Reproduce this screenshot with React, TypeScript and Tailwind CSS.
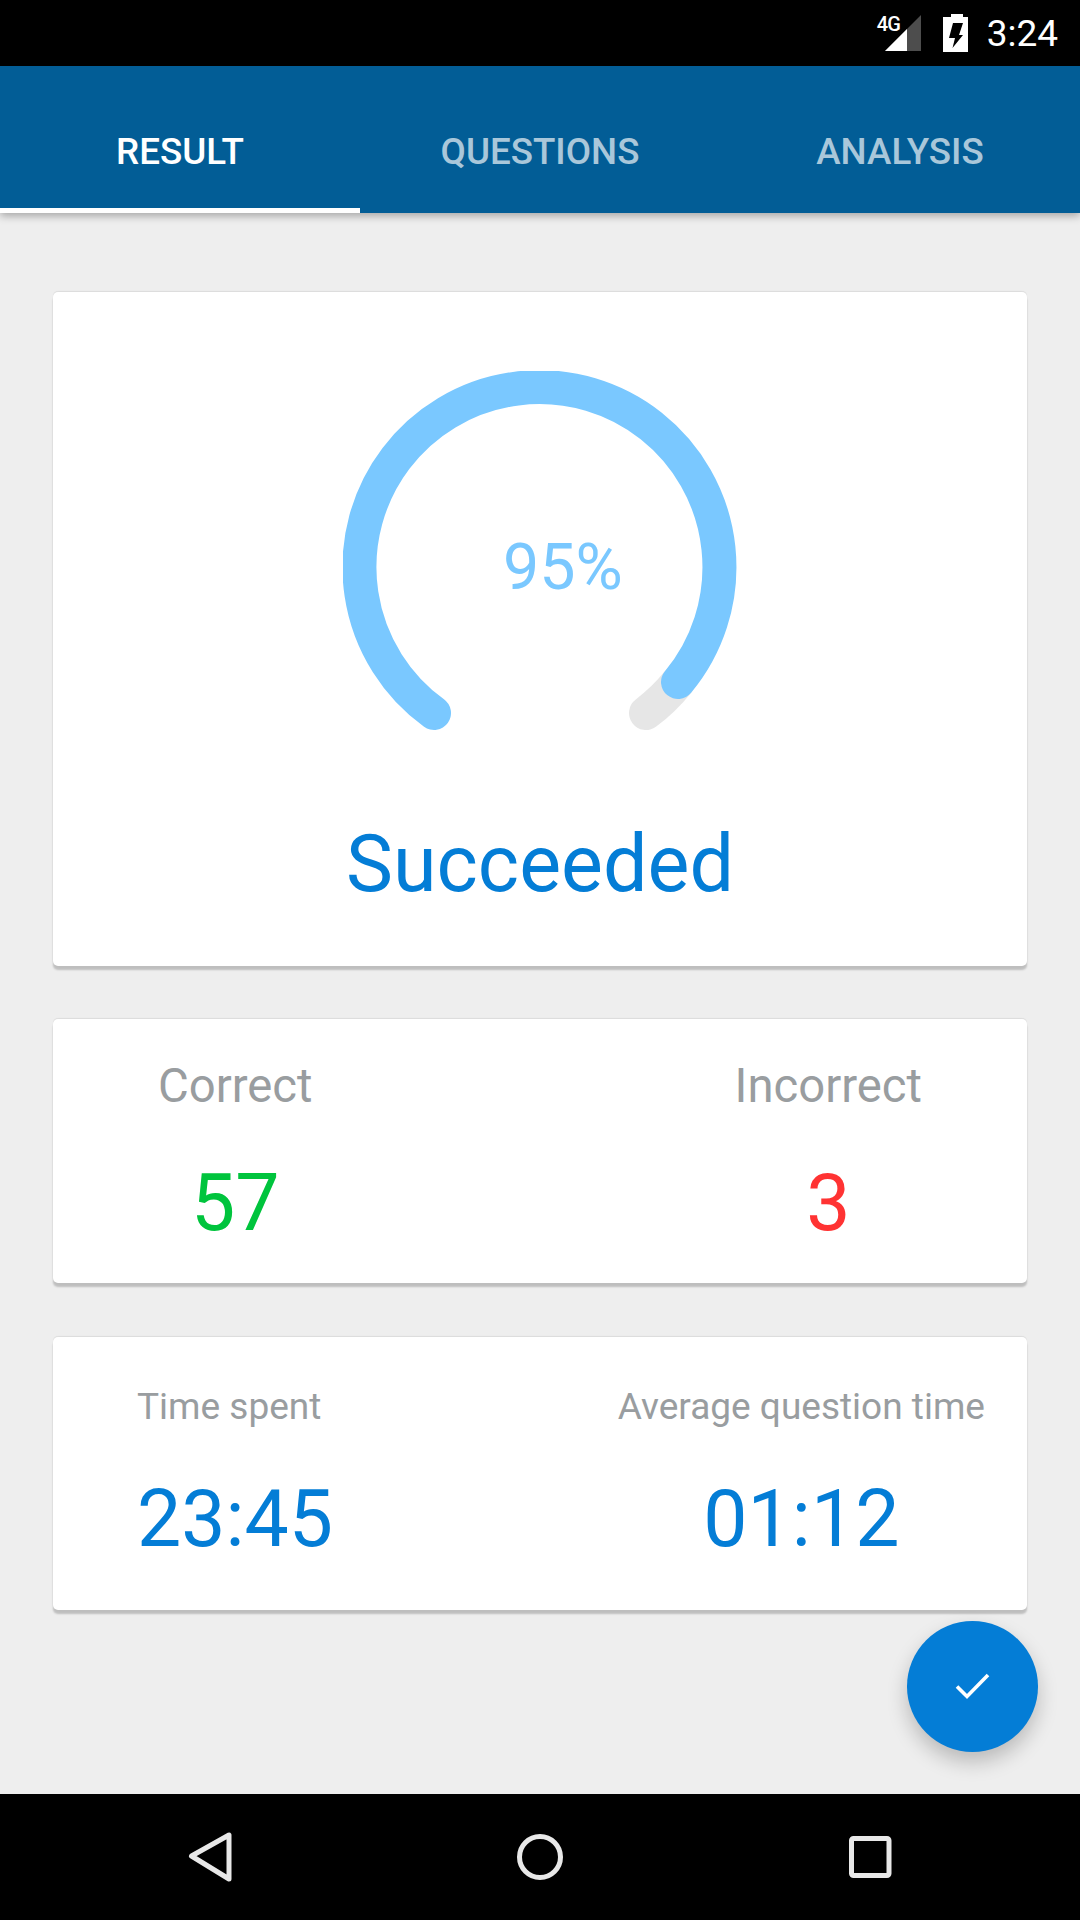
import React from "react";

const roboto = "font-['Roboto',sans-serif]";

function StatusBar() {
  return (
    <div className={`h-[66px] shrink-0 bg-black flex items-start justify-end text-white ${roboto}`}>
      <div className="relative mt-[14px] w-[38px] h-[38px]">
        <svg width="38" height="38" viewBox="0 0 38 38" className="block">
          <path d="M1 37 L37 1 V37 Z" fill="#fff" opacity="0.3" />
          <path d="M1 37 L23 15 V37 Z" fill="#fff" />
        </svg>
        <span className="absolute left-[-7px] top-[0px] text-[20px] font-medium leading-[20px] tracking-[-0.8px]">4G</span>
      </div>
      <svg width="26" height="38" viewBox="0 0 26 38" className="mt-[14px] ml-[21px]">
        <path fillRule="evenodd" d="M8 0 H20 V3 H25 V38 H0 V3 H8 Z M10 9 H20 L16 21 H20 L9.5 34 L12 24 H6 Z" fill="#fff" />
      </svg>
      <span className="ml-[18px] mr-[22px] mt-[14px] text-[37px] leading-[40px]">3:24</span>
    </div>
  );
}

function Tabs() {
  const tabs = ["RESULT", "QUESTIONS", "ANALYSIS"];
  return (
    <div className={`relative z-10 h-[147px] shrink-0 bg-[#025d96] flex shadow-[0_3px_8px_rgba(0,0,0,0.3)] ${roboto}`}>
      {tabs.map((t, i) => (
        <div
          key={t}
          className={`flex-1 flex items-center justify-center pt-[29px] text-[36.75px] font-medium border-b-[5px] ${
            i === 0 ? "text-white border-white" : "text-[#a9c7da] border-transparent"
          }`}
        >
          {t}
        </div>
      ))}
    </div>
  );
}

function Gauge() {
  const cx = 197;
  const cy = 197;
  const r = 180;
  const start = { x: cx - 106, y: cy + 145 };
  const blueEnd = { x: cx + 138, y: cy + 114 };
  const greyEnd = { x: cx + 106, y: cy + 145 };
  return (
    <div className="relative w-[394px] h-[364px]">
      <svg width="394" height="364" viewBox="0 0 394 364" fill="none" strokeWidth="34" strokeLinecap="round">
        <path d={`M${blueEnd.x} ${blueEnd.y} A${r} ${r} 0 0 1 ${greyEnd.x} ${greyEnd.y}`} stroke="#e6e6e6" />
        <path d={`M${start.x} ${start.y} A${r} ${r} 0 1 1 ${blueEnd.x} ${blueEnd.y}`} stroke="#7ac8ff" />
      </svg>
      <span className="absolute left-[160px] top-[158px] text-[64.5px] leading-[76px] text-[#7ac8ff]">95%</span>
    </div>
  );
}

function Card({ className, children }: { className: string; children: React.ReactNode }) {
  return (
    <div className={`bg-white rounded-[5px] shadow-[0_-1px_1px_rgba(0,0,0,0.08),0_4px_2px_rgba(0,0,0,0.2)] ${className}`}>
      {children}
    </div>
  );
}

function Fab() {
  return (
    <div className="absolute left-[907px] top-[1621px] w-[131px] h-[131px] rounded-full bg-[#047dd6] flex items-center justify-center shadow-[0_10px_20px_rgba(0,0,0,0.22)]">
      <svg width="36" height="28" viewBox="0 0 36 28" fill="none" className="-translate-y-[1px]">
        <path d="M2 14.5 L12 24.5 L33 3" stroke="#fff" strokeWidth="3.6" />
      </svg>
    </div>
  );
}

function NavBar() {
  return (
    <div className="h-[126px] shrink-0 bg-black">
      <svg width="1080" height="126" viewBox="0 0 1080 126" fill="none" stroke="#e8e8e8" strokeWidth="5" strokeLinejoin="round" className="block">
        <path d="M191.5 62 L229 41 V85 Z" />
        <circle cx="540" cy="63" r="20.5" />
        <rect x="851.5" y="44.5" width="37.5" height="37" rx="2" />
      </svg>
    </div>
  );
}

export default function App() {
  return (
    <div className={`relative w-[1080px] h-[1920px] overflow-hidden flex flex-col bg-[#eeeeee] ${roboto}`}>
      <StatusBar />
      <Tabs />
      <main className="flex-1 flex flex-col px-[53px] pt-[79px]">
        <Card className="h-[674px] flex flex-col items-center pt-[79px]">
          <Gauge />
          <div className="mt-[81px] text-[79px] leading-[96px] text-[#047dd6]">Succeeded</div>
        </Card>

        <Card className="mt-[53px] h-[264px] flex justify-between pl-[105px] pr-[105px] pt-[40px]">
          <div className="flex flex-col items-center">
            <span className="text-[47.25px] leading-[54px] text-[#999da0]">Correct</span>
            <span className="mt-[42px] text-[78.75px] leading-[96px] text-[#00c43d]">57</span>
          </div>
          <div className="flex flex-col items-center">
            <span className="text-[47.25px] leading-[54px] text-[#999da0]">Incorrect</span>
            <span className="mt-[42px] text-[78.75px] leading-[96px] text-[#ff3333]">3</span>
          </div>
        </Card>

        <Card className="mt-[54px] h-[273px] flex justify-between pl-[84px] pr-[42px] pt-[49px]">
          <div className="flex flex-col items-start">
            <span className="text-[37px] leading-[42px] text-[#999da0]">Time spent</span>
            <span className="mt-[43px] text-[78.75px] leading-[96px] text-[#047dd6]">23:45</span>
          </div>
          <div className="flex flex-col items-center">
            <span className="text-[37px] leading-[42px] text-[#999da0]">Average question time</span>
            <span className="mt-[43px] text-[78.75px] leading-[96px] text-[#047dd6]">01:12</span>
          </div>
        </Card>
      </main>
      <NavBar />
      <Fab />
    </div>
  );
}
